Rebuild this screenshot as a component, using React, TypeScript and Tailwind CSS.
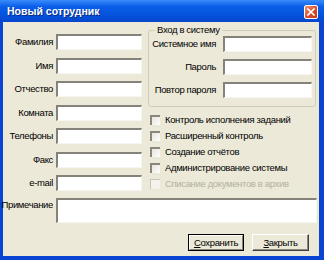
import React from 'react';

const field =
  'h-[16px] border-t-2 border-l-2 border-r border-b border-t-[#85827a] border-l-[#85827a] border-r-[#f6f5f0] border-b-[#f6f5f0] bg-white';

const leftFields = ['Фамилия', 'Имя', 'Отчество', 'Комната', 'Телефоны', 'Факс', 'e-mail'];
const loginFields = ['Системное имя', 'Пароль', 'Повтор пароля'];
const rights = [
  { label: 'Контроль исполнения заданий', disabled: false },
  { label: 'Расширенный контроль', disabled: false },
  { label: 'Создание отчётов', disabled: false },
  { label: 'Администрирование системы', disabled: false },
  { label: 'Списание документов в архив', disabled: true },
];

export default function App() {
  return (
    <div className="flex h-[260px] w-[324px] flex-col font-['Liberation_Sans',Arial,sans-serif] text-[9.5px] leading-[12px] tracking-[-0.35px] whitespace-nowrap text-black">
      {/* Title bar */}
      <div className="flex h-[22px] shrink-0 items-center justify-between bg-[linear-gradient(#3a8bfb,#0a5ee9_30%,#0552dc_70%,#0446cc)] pl-[7px] pr-[6px]">
        <span className="text-[10.5px] font-bold tracking-[0px] text-white [text-shadow:1px_1px_#0b2a80]">Новый сотрудник</span>
        <div className="mt-[2px] flex h-[14px] w-[14px] items-center justify-center rounded-[2px] border border-white bg-[linear-gradient(135deg,#f09478,#d8492a_60%,#c23d1e)]">
          <svg width="8" height="8" viewBox="0 0 8 8">
            <path d="M1 1L7 7M7 1L1 7" stroke="white" strokeWidth="1.6" strokeLinecap="square" />
          </svg>
        </div>
      </div>

      {/* Body */}
      <div className="flex flex-1 flex-col border-b-[4px] border-l-[3px] border-r-[5px] border-[#0a44d2] bg-[#ece9d8]">
        <div className="flex">
          {/* Personal data */}
          <div className="mt-[12px] flex flex-col gap-[7.5px]">
            {leftFields.map((label) => (
              <div key={label} className="flex items-center gap-[3px]">
                <span className="flex w-[50px] justify-end">{label}</span>
                <div className={`w-[86px] ${field}`} />
              </div>
            ))}
          </div>

          {/* Login + rights */}
          <div className="ml-[6px] flex w-[168px] flex-col">
            <fieldset className="mt-[2px] rounded-[3px] border border-[#cfccbd] pb-[8px]">
              <legend className="ml-[6px] px-[2px] leading-[12px]">Вход в систему</legend>
              <div className="flex flex-col gap-[7px]">
                {loginFields.map((label) => (
                  <div key={label} className="flex items-center gap-[7px]">
                    <span className="flex w-[67px] justify-end">{label}</span>
                    <div className={`w-[89px] ${field}`} />
                  </div>
                ))}
              </div>
            </fieldset>

            <div className="mt-[5px] flex flex-col">
              {rights.map((r) => (
                <div key={r.label} className="flex h-[16px] items-center">
                  <div
                    className={
                      r.disabled
                        ? 'ml-[2px] h-[10px] w-[10px] border-t border-l border-t-[#c9c6b8] border-l-[#c9c6b8] bg-[#f3f2ec]'
                        : 'ml-[2px] h-[10px] w-[10px] border-t-2 border-l-2 border-t-[#8a877e] border-l-[#8a877e] bg-[linear-gradient(135deg,#e6e4da,#ffffff)]'
                    }
                  />
                  <span className={r.disabled ? 'ml-[5px] text-[#b3b0a2]' : 'ml-[5px]'}>{r.label}</span>
                </div>
              ))}
            </div>
          </div>
        </div>

        {/* Note */}
        <div className="mt-[6px] flex items-start gap-[3px]">
          <span className="flex w-[50px] justify-end pt-[1px]">Примечание</span>
          <div className="h-[25px] w-[261px] border-t-2 border-l-2 border-r border-b border-t-[#85827a] border-l-[#85827a] border-r-[#f6f5f0] border-b-[#f6f5f0] bg-white" />
        </div>

        {/* Buttons */}
        <div className="mt-[11px] flex justify-end gap-[8px] pr-[10px]">
          <button className="h-[17px] w-[56px] border border-black bg-[#ece9d8] p-0">
            <div className="flex h-full w-full items-center justify-center border-t border-l border-r border-b border-t-white border-l-white border-r-[#85827a] border-b-[#85827a]">
              <span>
                <span className="underline">С</span>охранить
              </span>
            </div>
          </button>
          <button className="flex h-[17px] w-[57px] items-center justify-center border-t border-l border-r border-b border-t-white border-l-white border-r-[#404040] border-b-[#404040] bg-[#ece9d8] p-0 shadow-[inset_-1px_-1px_#8a877e]">
            <span>
              <span className="underline">З</span>акрыть
            </span>
          </button>
        </div>
      </div>
    </div>
  );
}
